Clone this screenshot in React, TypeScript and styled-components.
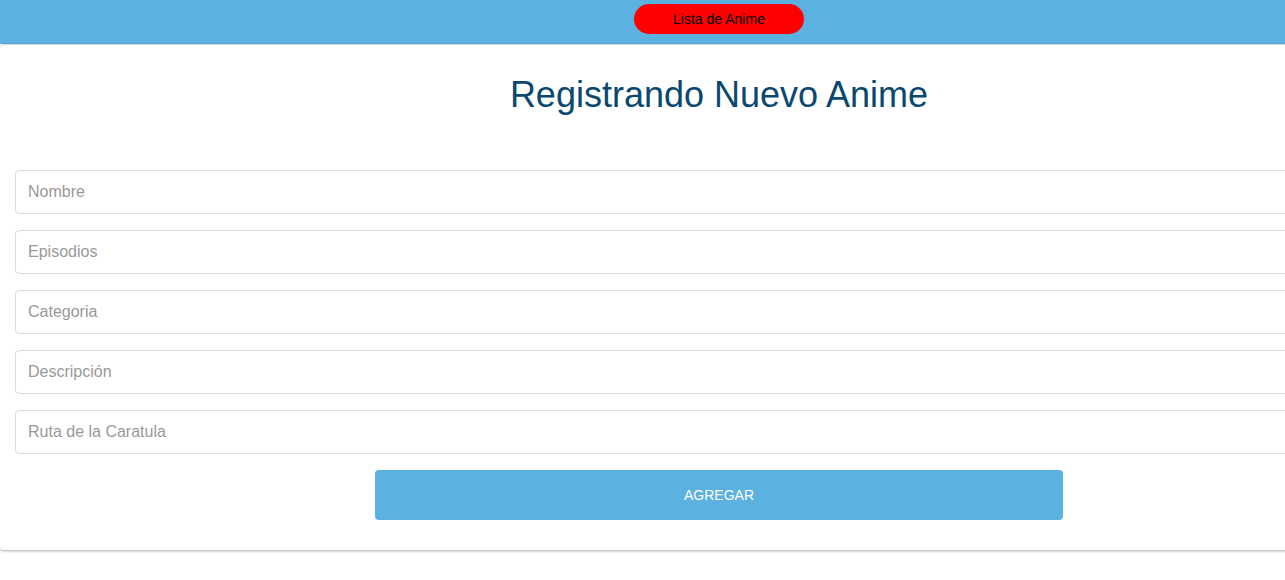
import React from "react";
import styled, { createGlobalStyle } from "styled-components";

const Global = createGlobalStyle`
  html, body { margin: 0; padding: 0; overflow: hidden; background: #fff; }
  body { font-family: "Liberation Sans", Arial, sans-serif; }
  * { box-sizing: border-box; }
`;

const Page = styled.div`
  width: 1438px;
  padding-bottom: 10px;
`;

const Header = styled.header`
  height: 44px;
  background: #5bb1df;
  display: flex;
  justify-content: center;
  align-items: flex-start;
  padding-top: 4px;
`;

const NavButton = styled.button`
  width: 170px;
  height: 30px;
  border: none;
  border-radius: 15px;
  background: #ff0000;
  color: #000;
  font-family: "Liberation Sans", Arial, sans-serif;
  font-size: 14px;
  padding: 0;
  cursor: pointer;
`;

const Card = styled.section`
  background: #fff;
  border-top: 1px solid #d6d6d6;
  border-radius: 4px;
  box-shadow: 0 1px 3px rgba(0, 0, 0, 0.35);
  padding: 28px 15px 30px;
  display: flex;
  flex-direction: column;
`;

const Title = styled.h1`
  margin: 0 0 53px;
  text-align: center;
  font-weight: 400;
  font-size: 36px;
  line-height: 44px;
  color: #0b4870;
`;

const Form = styled.form`
  display: flex;
  flex-direction: column;
  gap: 16px;
`;

const Input = styled.input`
  width: 100%;
  height: 44px;
  border: 1px solid #dcdcdc;
  border-radius: 4px;
  padding: 0 12px;
  font-family: "Liberation Sans", Arial, sans-serif;
  font-size: 16px;
  color: #333;
  outline: none;
  &::placeholder { color: #999; }
`;

const Submit = styled.button`
  align-self: center;
  width: 688px;
  height: 50px;
  border: none;
  border-radius: 4px;
  background: #5bb1df;
  color: #fff;
  font-family: "Liberation Sans", Arial, sans-serif;
  font-size: 14px;
  cursor: pointer;
`;

const fields = ["Nombre", "Episodios", "Categoria", "Descripción", "Ruta de la Caratula"];

export default function App() {
  return (
    <Page>
      <Global />
      <Header>
        <NavButton>Lista de Anime</NavButton>
      </Header>
      <Card>
        <Title>Registrando Nuevo Anime</Title>
        <Form onSubmit={(e) => e.preventDefault()}>
          {fields.map((f) => (
            <Input key={f} placeholder={f} />
          ))}
          <Submit type="submit">AGREGAR</Submit>
        </Form>
      </Card>
    </Page>
  );
}
